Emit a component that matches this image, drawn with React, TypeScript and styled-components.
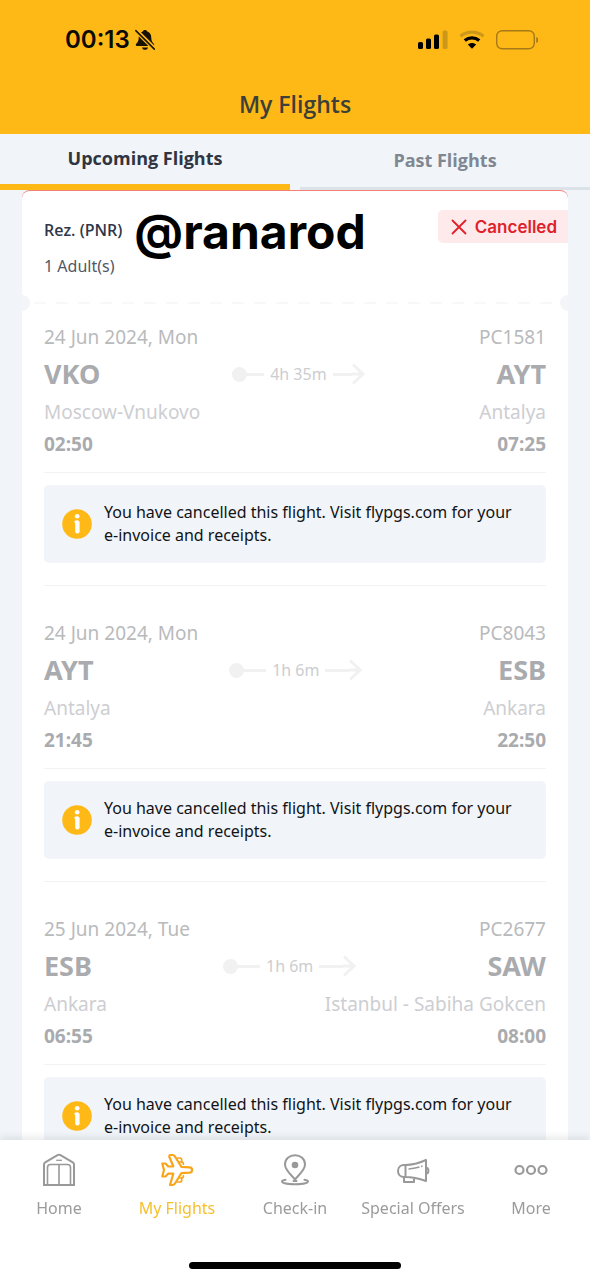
import React from "react";
import styled, { createGlobalStyle } from "styled-components";

const sans = `"Open Sans", "Noto Sans", sans-serif`;
const noto = `"Noto Sans", "Open Sans", sans-serif`;
const system = `Inter, "Liberation Sans", sans-serif`;
const amber = "#ffb917";

const GlobalStyle = createGlobalStyle`
  *, *::before, *::after { box-sizing: border-box; }
  body { margin: 0; background: #f1f5f9; font-family: ${noto}; }
  h1, h2, p, ul, ol { margin: 0; padding: 0; }
  ul, ol { list-style: none; }
  button { font: inherit; border: 0; margin: 0; padding: 0; background: none; cursor: pointer; }
`;

const Screen = styled.div`
  display: flex;
  flex-direction: column;
  height: 100vh;
`;

const Header = styled.header`
  flex: none;
  background: ${amber};
`;

const StatusBar = styled.div`
  display: flex;
  align-items: center;
  justify-content: space-between;
  height: 80px;
  padding: 0 51px 0 65px;
`;

const StatusGroup = styled.div<{ $gap: number }>`
  display: flex;
  align-items: center;
  gap: ${(p) => p.$gap}px;
`;

const Clock = styled.span`
  font: 600 24px/28px ${system};
  color: #0c0a04;
`;

const Title = styled.h1`
  padding: 7px 0 13px;
  font: 600 23px/34px ${sans};
  color: #3c4038;
  text-align: center;
`;

const Tabs = styled.div`
  flex: none;
  display: grid;
  grid-template-columns: 1fr 1fr;
  gap: 10px;
  background: #f1f4f8;
`;

const Tab = styled.button<{ $active?: boolean }>`
  && {
    height: 56px;
    padding-bottom: 2px;
    border-bottom: ${(p) => (p.$active ? `6px solid ${amber}` : "3px solid #dce3e8")};
    font: 700 18px/24px ${sans};
    color: ${(p) => (p.$active ? "#2f3542" : "#7f8792")};
  }
`;

const Content = styled.main`
  flex: 1;
  min-height: 0;
  overflow-y: auto;
  scrollbar-width: none;
  padding: 0 22px;
  background: #f1f5f9;
`;

const Booking = styled.article`
  overflow: hidden;
  border-top: 1px solid #f58078;
  border-radius: 8px 8px 0 0;
  background: #ffffff;
`;

const BookingHead = styled.header`
  display: flex;
  align-items: flex-start;
  justify-content: space-between;
  height: 101px;
  padding: 19px 0 0 22px;
`;

const Reservation = styled.div`
  padding-top: 8px;
`;

const ReservationLabel = styled.h2`
  white-space: nowrap;
  font: 600 16px/24px ${sans};
  color: #30374a;
`;

const Passengers = styled.p`
  padding-top: 12px;
  font: 400 16px/24px ${noto};
  color: #515766;
`;

const Handle = styled.p`
  flex: 1;
  padding-left: 12px;
  font: 700 48px/44px ${system};
  color: #000000;
`;

const Badge = styled.span`
  display: flex;
  align-items: center;
  gap: 8px;
  height: 33px;
  padding: 0 11px 0 13px;
  border-radius: 5px 0 0 5px;
  background: #feeaea;
  font: 600 17px/24px ${system};
  color: #e0212b;
`;

const Perforation = styled.div`
  display: flex;
  align-items: center;
  justify-content: space-between;
  height: 22px;
`;

const Notch = styled.span<{ $side: "left" | "right" }>`
  width: 8px;
  height: 16px;
  background: #f3f5f8;
  border-radius: ${(p) => (p.$side === "left" ? "0 8px 8px 0" : "8px 0 0 8px")};
`;

const Dashes = styled.span`
  flex: 1;
  height: 2px;
  margin: 0 8px 0 4px;
  background: repeating-linear-gradient(90deg, #f7f8f9 0 12px, transparent 12px 22px);
`;

const Flight = styled.li`
  padding: 0 22px;
`;

const FlightBody = styled.div`
  padding: 9px 0 11px;
  border-bottom: 1px solid #f0f2f3;
`;

const Row = styled.div<{ $height: number }>`
  display: flex;
  align-items: center;
  justify-content: space-between;
  height: ${(p) => p.$height}px;
`;

const Meta = styled.span`
  font: 400 19px/28px ${noto};
  color: #b9babc;
`;

const Code = styled.strong`
  font: 700 27px/36px ${noto};
  color: #a9abae;
`;

const City = styled.span`
  font: 400 19px/28px ${noto};
  color: #cdced2;
`;

const Time = styled.time`
  font: 700 19px/28px ${noto};
  color: #a9abae;
`;

const Duration = styled.span`
  display: flex;
  align-items: center;
  width: 133px;
  font: 400 16px/24px ${noto};
  color: #cccdd0;
`;

const DurationText = styled.span`
  padding: 0 6px;
  white-space: nowrap;
`;

const RouteDot = styled.span`
  width: 15px;
  height: 15px;
  border-radius: 50%;
  background: #f1f1f2;
`;

const RouteLine = styled.span`
  flex: 1;
  height: 3px;
  background: #f1f1f2;
`;

const RouteTail = styled.span`
  flex: 1;
  display: flex;
  align-items: center;
`;

const Notice = styled.div`
  display: flex;
  align-items: center;
  gap: 12px;
  margin: 12px 0 22px;
  height: 78px;
  padding: 0 24px 0 18px;
  border-radius: 5px;
  background: #f1f5f9;
  font: 400 16px/23px ${noto};
  color: #111315;
`;

const NoticeIcon = styled.span`
  flex: none;
  display: flex;
`;

const Divider = styled.hr`
  height: 1px;
  margin: 0 0 24px;
  border: 0;
  background: #f0f2f3;
`;

const NavBar = styled.nav`
  flex: none;
  position: relative;
  background: #ffffff;
  box-shadow: 0 -2px 8px rgba(30, 40, 50, 0.12);
`;

const NavList = styled.ul`
  display: grid;
  grid-template-columns: repeat(5, 1fr);
  height: 122px;
  padding-top: 13px;
`;

const NavItem = styled.li`
  display: flex;
  justify-content: center;
`;

const NavButton = styled.button<{ $active?: boolean }>`
  && {
    display: flex;
    flex-direction: column;
    align-items: center;
    gap: 9px;
    height: 68px;
    white-space: nowrap;
    font: 400 16px/24px ${noto};
    color: ${(p) => (p.$active ? "#f6bf2c" : "#9b9b9b")};
  }
`;

const HomeIndicator = styled.div`
  width: 212px;
  height: 7px;
  margin: 0 auto 11px;
  border-radius: 4px;
  background: #000000;
`;

const MutedBell = () => (
  <svg width="20" height="22" viewBox="0 0 20 22" aria-hidden="true">
    <path
      d="M10 1C8.800 1 8 1.700 7.700 2.600C4.800 3.500 3.700 6 3.700 9C3.700 12 2.500 13.300 1.200 14.700C.4 15.600.7 17 2 17H18C19.300 17 19.600 15.600 18.800 14.700C17.500 13.300 16.300 12 16.300 9C16.300 6 15.200 3.500 12.300 2.600C12 1.700 11.200 1 10 1Z"
      fill="#171203"
    />
    <path d="M7 18.400H13C12.700 20 11.500 20.800 10 20.800S7.300 20 7 18.400Z" fill="#171203" />
    <path d="M1 1.500L19.500 20" stroke={amber} strokeWidth="4.500" />
    <path d="M.8 1.600L19.300 20.100" stroke="#171203" strokeWidth="1.500" strokeLinecap="round" />
  </svg>
);

const Signal = () => (
  <svg width="30" height="20" viewBox="0 0 30 20" aria-hidden="true">
    <rect x="0" y="12" width="5" height="7" rx="1.600" />
    <rect x="8" y="8.500" width="5" height="10.500" rx="1.600" />
    <rect x="16" y="4.500" width="5" height="14.500" rx="1.600" />
    <rect x="24.600" y=".5" width="5" height="18.500" rx="1.600" fill="#cd9719" />
  </svg>
);

const Wifi = () => (
  <svg width="26" height="20" viewBox="0 0 26 20" fill="none" aria-hidden="true">
    <path d="M1.500 6.200C8 .7 18 .7 24.500 6.200" stroke="#cd9719" strokeWidth="3.400" />
    <path d="M5.800 10.500C10 7 16 7 20.200 10.500" stroke="#000" strokeWidth="3.400" />
    <path d="M8.800 14.500C11.300 12.400 14.700 12.400 17.200 14.500L13 18.800Z" fill="#000" />
  </svg>
);

const Battery = () => (
  <svg width="43" height="20" viewBox="0 0 43 20" fill="none" aria-hidden="true">
    <rect x=".7" y=".7" width="37.600" height="18.100" rx="5.500" stroke="#a67a16" strokeWidth="1.400" />
    <path d="M40.200 7V13C41.500 12.600 42.200 11.500 42.200 10S41.500 7.400 40.200 7Z" fill="#a67a16" />
  </svg>
);

const Cross = () => (
  <svg width="16" height="16" viewBox="0 0 16 16" fill="none" aria-hidden="true">
    <path d="M1.500 1.500L14.500 14.500M14.500 1.500L1.500 14.500" stroke="#e0212b" strokeWidth="1.800" strokeLinecap="round" />
  </svg>
);

const ArrowHead = () => (
  <svg width="13" height="22" viewBox="0 0 13 22" fill="none" stroke="#f1f1f2" strokeWidth="3" aria-hidden="true">
    <path d="M0 11H11M1 1.500L11 11L1 20.500" />
  </svg>
);

const Info = () => (
  <svg width="30" height="30" viewBox="0 0 30 30" aria-hidden="true">
    <circle cx="15" cy="15" r="14.800" fill={amber} />
    <circle cx="15.200" cy="7.300" r="2.300" fill="#fff" />
    <path d="M15.400 13.600V22.200" fill="none" stroke="#fff" strokeWidth="4.400" strokeLinecap="round" />
    <path d="M13.600 12.700H15.400" stroke="#fff" strokeWidth="2.400" strokeLinecap="round" />
  </svg>
);

const HomeIcon = () => (
  <svg width="34" height="34" viewBox="0 0 34 34" fill="none" stroke="#999" aria-hidden="true">
    <path d="M2 32V11.500C2 10.500 2.400 9.800 3.200 9.300L15.500 2.200C16.500 1.700 17.500 1.700 18.500 2.200L30.800 9.300C31.600 9.800 32 10.500 32 11.500V32Z" strokeWidth="2" />
    <path d="M5.500 32V14.500C5.500 12.600 6.600 11.500 8.500 11.500H25.500C27.400 11.500 28.500 12.600 28.500 14.500V32M17 11.500V32" strokeWidth="1.600" />
    <path d="M14.200 7.300H20" strokeWidth="1.300" />
  </svg>
);

const PlaneIcon = () => (
  <svg width="34" height="34" viewBox="0 0 34 34" fill="none" stroke="#f9a51a" strokeWidth="2.200" strokeLinejoin="round" strokeLinecap="round" aria-hidden="true">
    <path d="M29.500 14.300C33 14.600 33 19.400 29.500 19.700L21.300 20.200L15 30.500C14.300 31.700 13.200 32 12 32H10L13.300 20.700L8.300 20.500L5.500 23.500H2.300L4 17L2.300 10.500H5.500L8.300 13.500L13.300 13.300L9.400 4C8.900 2.700 9.500 2 10.600 2H12.500C13.500 2 14.300 2.500 15 3.500L21.300 13.800Z" />
    <path d="M17.700 5H20C21.200 5 21.700 5.900 21.700 7V9.300M19.700 9H21.800C22.900 9 23.400 9.900 23.400 11.200M17.700 29H20C21.200 29 21.700 28.100 21.700 27V24.500M19.700 25H21.800C22.900 25 23.400 24.100 23.400 22.800" strokeWidth="1.700" />
  </svg>
);

const PinIcon = () => (
  <svg width="34" height="34" viewBox="0 0 34 34" fill="none" stroke="#999" strokeWidth="2" strokeLinecap="round" aria-hidden="true">
    <path d="M17 26.500C12.500 21 7 17 7 11.500C7 6 11.400 2.300 17 2.300S27 6 27 11.500C27 17 21.500 21 17 26.500Z" />
    <circle cx="17" cy="12" r="3.300" fill="#999" stroke="none" />
    <path d="M7.500 26.800C5 27.200 4 27.700 4 28.600C4 30.300 9.800 31.300 17 31.300S30 30.300 30 28.600C30 27.700 29 27.200 26.500 26.800M15.500 28H18.500" />
  </svg>
);

const MegaphoneIcon = () => (
  <svg width="34" height="34" viewBox="0 0 34 34" fill="none" stroke="#999" strokeWidth="2" strokeLinejoin="round" aria-hidden="true">
    <path d="M9.500 12H8C4.500 12 2 14.500 2 18S4.500 24 8 24H9.500C17 24 23 25.500 30 28V7C23 10.200 17 12 9.500 12ZM9.500 12V24" />
    <path d="M8 24.500V29H18V25.500M30 14.800C33.200 14.800 33.200 20.500 30 20.500" />
    <path d="M12.500 16C17 15.700 20 15 23.500 14M25 13.500L26.500 13" strokeWidth="1.400" />
  </svg>
);

const MoreIcon = () => (
  <svg width="34" height="34" viewBox="0 0 34 34" fill="none" stroke="#999" strokeWidth="2.200" aria-hidden="true">
    <circle cx="5.500" cy="17" r="4" />
    <circle cx="17" cy="17" r="4" />
    <circle cx="28.500" cy="17" r="4" />
  </svg>
);

interface Stop {
  code: string;
  city: string;
  time: string;
}

interface FlightData {
  date: string;
  number: string;
  duration: string;
  from: Stop;
  to: Stop;
}

const flights: FlightData[] = [
  {
    date: "24 Jun 2024, Mon",
    number: "PC1581",
    duration: "4h 35m",
    from: { code: "VKO", city: "Moscow-Vnukovo", time: "02:50" },
    to: { code: "AYT", city: "Antalya", time: "07:25" },
  },
  {
    date: "24 Jun 2024, Mon",
    number: "PC8043",
    duration: "1h 6m",
    from: { code: "AYT", city: "Antalya", time: "21:45" },
    to: { code: "ESB", city: "Ankara", time: "22:50" },
  },
  {
    date: "25 Jun 2024, Tue",
    number: "PC2677",
    duration: "1h 6m",
    from: { code: "ESB", city: "Ankara", time: "06:55" },
    to: { code: "SAW", city: "Istanbul - Sabiha Gokcen", time: "08:00" },
  },
];

const navItems = [
  { label: "Home", icon: <HomeIcon /> },
  { label: "My Flights", icon: <PlaneIcon />, active: true },
  { label: "Check-in", icon: <PinIcon /> },
  { label: "Special Offers", icon: <MegaphoneIcon /> },
  { label: "More", icon: <MoreIcon /> },
];

const FlightItem = ({ flight }: { flight: FlightData }) => (
  <Flight>
    <FlightBody>
      <Row $height={28}>
        <Meta>{flight.date}</Meta>
        <Meta>{flight.number}</Meta>
      </Row>
      <Row $height={46}>
        <Code>{flight.from.code}</Code>
        <Duration>
          <RouteTail>
            <RouteDot />
            <RouteLine />
          </RouteTail>
          <DurationText>{flight.duration}</DurationText>
          <RouteTail>
            <RouteLine />
            <ArrowHead />
          </RouteTail>
        </Duration>
        <Code>{flight.to.code}</Code>
      </Row>
      <Row $height={30}>
        <City>{flight.from.city}</City>
        <City>{flight.to.city}</City>
      </Row>
      <Row $height={34}>
        <Time>{flight.from.time}</Time>
        <Time>{flight.to.time}</Time>
      </Row>
    </FlightBody>
    <Notice>
      <NoticeIcon>
        <Info />
      </NoticeIcon>
      <p>You have cancelled this flight. Visit flypgs.com for your e-invoice and receipts.</p>
    </Notice>
    <Divider />
  </Flight>
);

export default function App() {
  return (
    <Screen>
      <GlobalStyle />
      <Header>
        <StatusBar>
          <StatusGroup $gap={5}>
            <Clock>00:13</Clock>
            <MutedBell />
          </StatusGroup>
          <StatusGroup $gap={11}>
            <Signal />
            <Wifi />
            <Battery />
          </StatusGroup>
        </StatusBar>
        <Title>My Flights</Title>
      </Header>
      <Tabs role="tablist">
        <Tab role="tab" aria-selected="true" $active>
          Upcoming Flights
        </Tab>
        <Tab role="tab" aria-selected="false">
          Past Flights
        </Tab>
      </Tabs>
      <Content>
        <Booking>
          <BookingHead>
            <Reservation>
              <ReservationLabel>Rez. (PNR)</ReservationLabel>
              <Passengers>1 Adult(s)</Passengers>
            </Reservation>
            <Handle>@ranarod</Handle>
            <Badge>
              <Cross />
              Cancelled
            </Badge>
          </BookingHead>
          <Perforation>
            <Notch $side="left" />
            <Dashes />
            <Notch $side="right" />
          </Perforation>
          <ol>
            {flights.map((flight) => (
              <FlightItem key={flight.number} flight={flight} />
            ))}
          </ol>
        </Booking>
      </Content>
      <NavBar>
        <NavList>
          {navItems.map((item) => (
            <NavItem key={item.label}>
              <NavButton $active={item.active} aria-current={item.active ? "page" : undefined}>
                {item.icon}
                {item.label}
              </NavButton>
            </NavItem>
          ))}
        </NavList>
        <HomeIndicator />
      </NavBar>
    </Screen>
  );
}
